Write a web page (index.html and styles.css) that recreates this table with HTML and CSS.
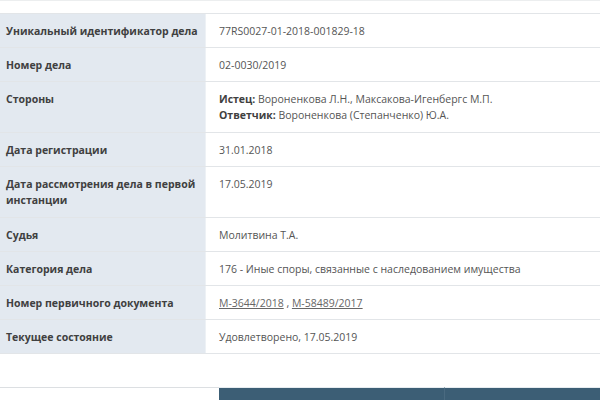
FILE: index.html
```html
<!DOCTYPE html>
<html lang="ru">
<head>
<meta charset="utf-8">
<link rel="stylesheet" href="styles.css">
</head>
<body>
<div class="topline"></div>
<div class="card">
  <div class="row"><div class="label">Уникальный идентификатор дела</div><div class="value">77RS0027-01-2018-001829-18</div></div>
  <div class="row"><div class="label">Номер дела</div><div class="value">02-0030/2019</div></div>
  <div class="row tall"><div class="label">Стороны</div><div class="value"><b>Истец:</b> Вороненкова Л.Н., Максакова-Игенбергс М.П.<br><b>Ответчик:</b> Вороненкова (Степанченко) Ю.А.</div></div>
  <div class="row"><div class="label">Дата регистрации</div><div class="value">31.01.2018</div></div>
  <div class="row tall"><div class="label">Дата рассмотрения дела в первой инстанции</div><div class="value">17.05.2019</div></div>
  <div class="row"><div class="label">Судья</div><div class="value">Молитвина Т.А.</div></div>
  <div class="row"><div class="label">Категория дела</div><div class="value">176 - Иные споры, связанные с наследованием имущества</div></div>
  <div class="row"><div class="label">Номер первичного документа</div><div class="value"><a href="#">М-3644/2018</a> , <a href="#">М-58489/2017</a></div></div>
  <div class="row"><div class="label">Текущее состояние</div><div class="value">Удовлетворено, 17.05.2019</div></div>
</div>
<div class="bottom">
  <div class="blank"></div>
  <div class="head"></div>
  <div class="head"></div>
</div>
</body>
</html>
```
FILE: styles.css
```css
html, body { margin: 0; padding: 0; background: #fff; }
body {
  font-family: "Open Sans", "Liberation Sans", sans-serif;
  font-size: 10.5px;
  color: #555;
  width: 600px;
  height: 400px;
  overflow: hidden;
}
.topline { height: 1px; background: #eceeef; margin-bottom: 12px; }
.card { border-top: 1px solid #e2e5e8; }
.row {
  display: grid;
  grid-template-columns: 206px 1fr;
  border-bottom: 1px solid #e2e5e8;
}
.row.tall .label, .row.tall .value { padding-bottom: 9px; }
.label {
  background: #e3e9f0;
  border-right: 1px solid #edf1f5;
  padding: 9px 4px 8px 6px;
  line-height: 16px;
  font-weight: 700;
  color: #404040;
}
.value {
  padding: 9px 12px 8px 13px;
  line-height: 16px;
}
.value b { color: #404040; font-weight: 700; }
.value a { color: #666; text-decoration: underline; }
.bottom {
  margin-top: 33px;
  display: grid;
  grid-template-columns: 219px 225px 1fr;
  height: 20px;
}
.blank { border-top: 1px solid #dcdfe2; }
.head { background: #3c5e75; border-top: 1px solid #e6ecf0; }
.head + .head { border-left: 1px solid #4a6a80; }
```
